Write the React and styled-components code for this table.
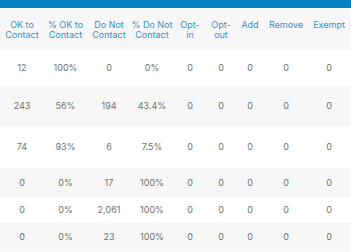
import React from "react";
import styled, { createGlobalStyle } from "styled-components";

const Global = createGlobalStyle`
  html, body { margin: 0; padding: 0; background: #fff; }
  body { font-family: Inter, "Liberation Sans", sans-serif; }
`;

const COLS = "44px 43px 44px 42px 34px 28px 30px 42px 44px";

const Page = styled.div`
  width: 351px;
  height: 252px;
  overflow: hidden;
  background: #fff;
`;

const TopBar = styled.div`
  height: 8px;
  background: #0783c5;
`;

const HeaderRow = styled.div`
  display: grid;
  grid-template-columns: ${COLS};
  height: 42px;
  box-sizing: border-box;
  padding-top: 12px;
  background: #f7f7f7;
`;

const HeadCell = styled.div`
  font-size: 9px;
  line-height: 10px;
  color: #3290d4;
  text-align: center;
  white-space: pre-line;
`;

const Row = styled.div`
  display: grid;
  grid-template-columns: ${COLS};
  align-items: center;
  height: ${(p) => p.$h}px;
  background: ${(p) => (p.$alt ? "#f7f7f7" : "#ffffff")};
`;

const Cell = styled.div`
  font-size: 9px;
  line-height: 10px;
  color: #707070;
  text-align: center;
`;

const headers = [
  "OK to\nContact",
  "% OK to\nContact",
  "Do Not\nContact",
  "% Do Not\nContact",
  "Opt-\nin",
  "Opt-\nout",
  "Add",
  "Remove",
  "Exempt",
];

const rows = [
  { h: 36, v: ["12", "100%", "0", "0%"] },
  { h: 40, v: ["243", "56%", "194", "43.4%"] },
  { h: 42, v: ["74", "93%", "6", "7.5%"] },
  { h: 29, v: ["0", "0%", "17", "100%"] },
  { h: 26, v: ["0", "0%", "2,061", "100%"] },
  { h: 28, v: ["0", "0%", "23", "100%"] },
];

export default function App() {
  return (
    <Page>
      <Global />
      <TopBar />
      <HeaderRow>
        {headers.map((h) => (
          <HeadCell key={h}>{h}</HeadCell>
        ))}
      </HeaderRow>
      {rows.map((r, i) => (
        <Row key={i} $h={r.h} $alt={i % 2 === 1}>
          {[...r.v, "0", "0", "0", "0", "0"].map((c, j) => (
            <Cell key={j}>{c}</Cell>
          ))}
        </Row>
      ))}
    </Page>
  );
}
